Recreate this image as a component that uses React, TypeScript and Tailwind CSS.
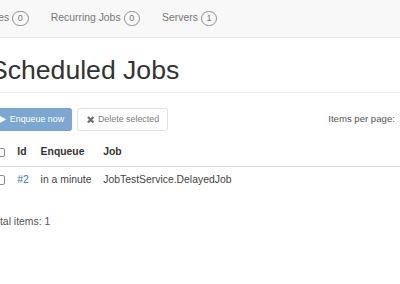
import React from "react";

function Badge({ n }: { n: number }) {
  return (
    <span className="inline-flex h-[15px] w-[16.3px] items-center justify-center rounded-full border border-[#8f8f8f] text-[9px] leading-none text-[#777]">
      {n}
    </span>
  );
}

function NavLink({ label, n, first }: { label: string; n: number; first?: boolean }) {
  return (
    <a
      className={
        "flex items-center gap-[3px] px-[11.1px] leading-[14.8px] text-[#777] " +
        (first ? "-ml-[34.8px]" : "")
      }
    >
      <span>{label}</span>
      <Badge n={n} />
    </a>
  );
}

function Check() {
  return <span className="block h-[9.6px] w-[9.6px] rounded-[2px] border border-[#8a8a8a] bg-white" />;
}

export default function App() {
  return (
    <div
      className="h-[284px] w-[400px] overflow-hidden bg-white text-[10.4px] text-[#333]"
      style={{ fontFamily: '"Liberation Sans", Arial, sans-serif' }}
    >
      <nav className="flex h-[38px] items-center border-b border-[#e7e7e7] bg-[#f8f8f8]">
        <NavLink label="Retries" n={0} first />
        <NavLink label="Recurring Jobs" n={0} />
        <NavLink label="Servers" n={1} />
      </nav>

      <div className="-ml-[10px] w-[600px]">
        <h1 className="mt-[18.3px] border-b border-[#eee] pb-[6.5px] text-[26.6px] font-medium leading-[1.1] text-[#333]">
          Scheduled Jobs
        </h1>

        <div className="mt-[15.3px] flex items-center">
          <button className="flex h-[22.7px] items-center gap-[2.5px] rounded-[2.2px] border border-[#7ea6cb] bg-[#7ba7d0] px-[7.4px] text-[8.9px] text-white">
            <svg width="8.9" height="8.9" viewBox="0 0 12 12" className="shrink-0">
              <path d="M1.5 0.8 L11.2 6 L1.5 11.2 Z" fill="#ffffff" />
            </svg>
            <span>Enqueue now</span>
          </button>
          <button className="ml-[4.8px] flex h-[22.7px] items-center gap-[3.8px] rounded-[2.2px] border border-[#e0e0e0] bg-white px-[7.4px] text-[8.9px] text-[#7c7c7c]">
            <svg width="7.5" height="7.5" viewBox="0 0 10 10" className="ml-[1px] shrink-0">
              <path d="M1.3 1.3 L8.7 8.7 M8.7 1.3 L1.3 8.7" stroke="#6f6f6f" strokeWidth="3" strokeLinecap="butt" />
            </svg>
            <span>Delete selected</span>
          </button>
          <span className="ml-[160.7px] text-[9.6px] text-[#555]">Items per page:</span>
        </div>

        <table className="mt-[8.3px] w-full border-collapse text-left">
          <thead>
            <tr>
              <th className="w-px whitespace-nowrap border-b-[1.5px] border-[#ddd] px-[5.9px] py-[5.9px] align-middle leading-[14.86px]">
                <Check />
              </th>
              <th className="w-px whitespace-nowrap border-b-[1.5px] border-[#ddd] px-[5.9px] py-[5.9px] font-bold leading-[14.86px]">
                Id
              </th>
              <th className="w-px whitespace-nowrap border-b-[1.5px] border-[#ddd] px-[5.9px] py-[5.9px] font-bold leading-[14.86px]">
                Enqueue
              </th>
              <th className="border-b-[1.5px] border-[#ddd] px-[5.9px] py-[5.9px] font-bold leading-[14.86px]">
                Job
              </th>
            </tr>
          </thead>
          <tbody>
            <tr>
              <td className="w-px whitespace-nowrap border-t border-[#ddd] px-[5.9px] py-[5.9px] align-middle leading-[14.86px]">
                <Check />
              </td>
              <td className="whitespace-nowrap border-t border-[#ddd] px-[5.9px] py-[5.9px] leading-[14.86px]">
                <a className="text-[#337ab7]">#2</a>
              </td>
              <td className="whitespace-nowrap border-t border-[#ddd] px-[5.9px] py-[5.9px] leading-[14.86px] text-[#444]">
                in a minute
              </td>
              <td className="border-t border-[#ddd] px-[5.9px] py-[5.9px] leading-[14.86px] text-[#444]">
                JobTestService.DelayedJob
              </td>
            </tr>
          </tbody>
        </table>

        <div className="-ml-[1px] mt-[21.4px] leading-[14.86px] text-[#555]">Total items: 1</div>
      </div>
    </div>
  );
}
